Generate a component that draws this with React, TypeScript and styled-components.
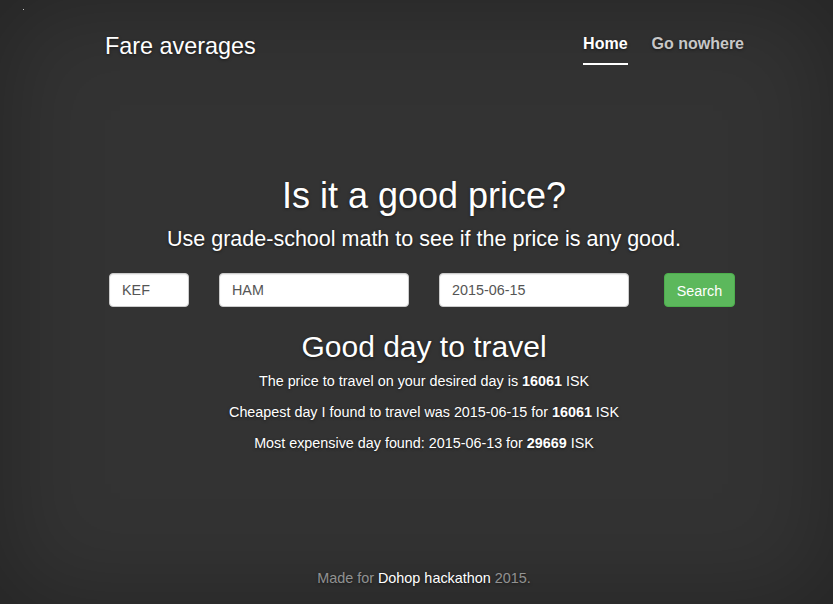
import React from "react";
import styled, { createGlobalStyle } from "styled-components";

const Global = createGlobalStyle`
  html, body { margin: 0; padding: 0; height: 100%; }
  body {
    background: #333;
    color: #fff;
    font-family: "Liberation Sans", Arial, sans-serif;
    font-size: 14px;
    line-height: 20px;
    text-shadow: 0 1px 3px rgba(0,0,0,.5);
    box-shadow: inset 0 0 100px rgba(0,0,0,.3);
    overflow: hidden;
  }
  #root { height: 100%; }
`;

const Page = styled.div`
  position: relative;
  height: 604px;
  display: flex;
  flex-direction: column;
  padding-left: 104px;
  box-sizing: border-box;
`;

const Speck = styled.span`
  position: absolute;
  left: 23px;
  top: 9px;
  width: 1px;
  height: 1px;
  background: #c8c8c8;
`;

const Column = styled.div`
  width: 640px;
  height: 100%;
  display: flex;
  flex-direction: column;
`;

const Masthead = styled.header`
  display: flex;
  justify-content: space-between;
  align-items: flex-start;
  padding-top: 33px;
`;

const Brand = styled.h3`
  margin: 0 0 0 1px;
  font-size: 23.4px;
  line-height: 26px;
  font-weight: 500;
`;

const Nav = styled.nav`
  display: flex;
  gap: 24px;
  margin-top: 1px;
`;

const NavLink = styled.a<{ $active?: boolean }>`
  display: block;
  font-size: 16px;
  line-height: 20px;
  font-weight: bold;
  text-decoration: none;
  color: ${(p) => (p.$active ? "#fff" : "rgba(255,255,255,.75)")};
  padding-bottom: 9px;
  border-bottom: 2px solid ${(p) => (p.$active ? "#fff" : "transparent")};
`;

const Cover = styled.main`
  display: flex;
  flex-direction: column;
  align-items: center;
  text-align: center;
  margin-top: 111px;
`;

const Title = styled.h1`
  margin: 0;
  font-size: 36px;
  line-height: 40px;
  font-weight: 500;
`;

const Lead = styled.p`
  margin: 9px 0 0;
  font-size: 21.5px;
  line-height: 28px;
  font-weight: 300;
`;

const Form = styled.form`
  align-self: stretch;
  display: flex;
  align-items: center;
  gap: 30px;
  padding-left: 5px;
  margin-top: 20px;
`;

const Field = styled.input<{ $w: number }>`
  width: ${(p) => p.$w}px;
  height: 34px;
  box-sizing: border-box;
  padding: 6px 12px;
  font-family: "Liberation Sans", Arial, sans-serif;
  font-size: 14.35px;
  line-height: 20px;
  color: #555;
  background: #fff;
  border: 1px solid #ccc;
  border-radius: 4px;
  box-shadow: inset 0 1px 1px rgba(0,0,0,.075);
  outline: none;
`;

const Button = styled.button`
  margin-left: 5px;
  width: 71px;
  height: 34px;
  padding: 7px 0 5px;
  box-sizing: border-box;
  font-family: "Liberation Sans", Arial, sans-serif;
  font-size: 14.35px;
  line-height: 20px;
  color: #fff;
  background: #5cb85c;
  border: 1px solid #4cae4c;
  border-radius: 4px;
  text-shadow: none;
  cursor: pointer;
`;

const Result = styled.h2`
  margin: 23px 0 7px;
  font-size: 30px;
  line-height: 34px;
  font-weight: 500;
`;

const Line = styled.p`
  margin: 0 0 10px;
  font-size: 14.35px;
  line-height: 21px;
`;

const Footer = styled.footer`
  margin-top: auto;
  padding-bottom: 16px;
  text-align: center;
  color: rgba(255,255,255,.5);
  font-size: 14.4px;
  line-height: 20px;
`;

const FootLink = styled.a`
  color: #fff;
  text-decoration: none;
`;

export default function App() {
  return (
    <>
      <Global />
      <Page>
        <Speck />
        <Column>
          <Masthead>
            <Brand>Fare averages</Brand>
            <Nav>
              <NavLink $active href="#">Home</NavLink>
              <NavLink href="#">Go nowhere</NavLink>
            </Nav>
          </Masthead>
          <Cover>
            <Title>Is it a good price?</Title>
            <Lead>Use grade-school math to see if the price is any good.</Lead>
            <Form onSubmit={(e) => e.preventDefault()}>
              <Field $w={80} defaultValue="KEF" />
              <Field $w={190} defaultValue="HAM" />
              <Field $w={190} defaultValue="2015-06-15" />
              <Button type="submit">Search</Button>
            </Form>
            <Result>Good day to travel</Result>
            <Line>
              The price to travel on your desired day is <b>16061</b> ISK
            </Line>
            <Line>
              Cheapest day I found to travel was 2015-06-15 for <b>16061</b> ISK
            </Line>
            <Line>
              Most expensive day found: 2015-06-13 for <b>29669</b> ISK
            </Line>
          </Cover>
          <Footer>
            Made for <FootLink href="#">Dohop hackathon</FootLink> 2015.
          </Footer>
        </Column>
      </Page>
    </>
  );
}
